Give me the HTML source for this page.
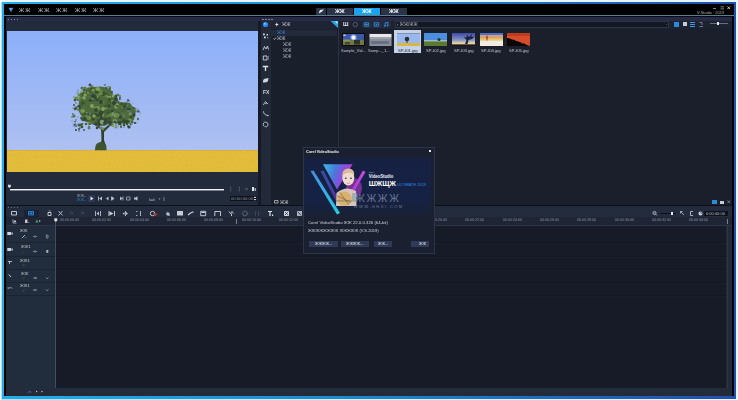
<!DOCTYPE html>
<html><head><meta charset="utf-8">
<style>
*{margin:0;padding:0;box-sizing:border-box}
html,body{width:738px;height:400px;overflow:hidden;background:#fff;font-family:"Liberation Sans",sans-serif}
.a{position:absolute}
.t{position:absolute;white-space:nowrap;font-size:5px;line-height:6px;color:#b9bec8;will-change:transform}
</style></head><body>
<div class="a" style="left:1px;top:1px;width:737px;height:399px;background:linear-gradient(90deg,#a8e6f8 0%,#d0f4fc 50%,#eaf6fc 100%);"></div>
<div class="a" style="left:1px;top:0px;width:737px;height:1.5px;background:#e6f7fd;"></div>
<div class="a" style="left:2px;top:2px;width:734px;height:396.5px;background:linear-gradient(90deg,#26ace8 0%,#1c8ccf 45%,#2050b0 100%);"></div>
<div class="a" style="left:4px;top:4px;width:730px;height:392px;background:#000;"></div>
<div class="a" style="left:4px;top:15px;width:730px;height:1px;background:#5a7f8c;"></div>
<svg class="a" style="left:8px;top:7px;" width="6" height="6" viewBox="0 0 6 6"><path d="M0.5 0.8 L5.5 0.8 L3 5.5 Z" fill="#3a70c0"/><path d="M1.3 1 L3.5 1 L3 3.8 Z" fill="#80c0f0"/><path d="M3.5 1 L5 1 L3.2 4 Z" fill="#4a90d8"/></svg>
<div class="t" style="left:18.5px;top:7.2px;font-size:5.6px;line-height:6.6px;color:#c4c8cc;letter-spacing:1.2px">ЖЖ</div>
<div class="t" style="left:37.5px;top:7.2px;font-size:5.6px;line-height:6.6px;color:#c4c8cc;letter-spacing:1.2px">ЖЖ</div>
<div class="t" style="left:56px;top:7.2px;font-size:5.6px;line-height:6.6px;color:#c4c8cc;letter-spacing:1.2px">ЖЖ</div>
<div class="t" style="left:74.5px;top:7.2px;font-size:5.6px;line-height:6.6px;color:#c4c8cc;letter-spacing:1.2px">ЖЖ</div>
<div class="t" style="left:93px;top:7.2px;font-size:5.6px;line-height:6.6px;color:#c4c8cc;letter-spacing:1.2px">ЖЖ</div>
<div class="a" style="left:316px;top:8px;width:10px;height:7px;background:#2a3347;"></div>
<div class="a" style="left:327px;top:8px;width:26px;height:7px;background:#2a3347;"></div>
<div class="a" style="left:354px;top:8px;width:26px;height:7px;background:#1aa3f0;"></div>
<div class="a" style="left:381px;top:8px;width:26px;height:7px;background:#2a3347;"></div>
<div class="t" style="left:335px;top:8.3px;font-size:5.4px;line-height:6.4px;color:#f4f4f4;font-weight:bold">ЖЖ</div>
<div class="t" style="left:362px;top:8.3px;font-size:5.4px;line-height:6.4px;color:#f4f8fc;font-weight:bold">ЖЖ</div>
<div class="t" style="left:389px;top:8.3px;font-size:5.4px;line-height:6.4px;color:#f4f4f4;font-weight:bold">ЖЖ</div>
<div class="t" style="left:697px;top:10px;font-size:4px;line-height:5px;color:#a8acb4;">V.Studio · 2019</div>
<div class="a" style="left:6px;top:16px;width:252px;height:189px;background:#222b3c;"></div>
<svg class="a" style="left:7px;top:31px" width="251" height="141" viewBox="7 31 251 141">
<defs><linearGradient id="sky" x1="0" y1="0" x2="0" y2="1"><stop offset="0" stop-color="#8cb0fa"/><stop offset="0.55" stop-color="#a2baf4"/><stop offset="1" stop-color="#b4c4ee"/></linearGradient>
<filter id="grain" x="0" y="0" width="1" height="1"><feTurbulence type="fractalNoise" baseFrequency="1.2" numOctaves="1" seed="3"/><feColorMatrix values="0 0 0 0 0.55  0 0 0 0 0.42  0 0 0 0 0.05  0 0 0 -1.4 0.9"/><feComposite in2="SourceGraphic" operator="in"/></filter></defs>
<rect x="7" y="31" width="251" height="141" fill="url(#sky)"/>
<rect x="7" y="150" width="251" height="22" fill="#e6be3a"/>
<rect x="7" y="150" width="251" height="22" fill="#fff" filter="url(#grain)" opacity="0.55"/><rect x="7" y="150" width="251" height="1" fill="#d8b040"/>
<path d="M101 126 L101.5 140 L100 146 L106 146 L104 140 L104 132 L113 123 L111.5 122.5 L103.5 129 Z" fill="#33402a"/>
<path d="M101.5 130 L90 121 L91 120 L102 128 Z" fill="#33402a"/>
<path d="M95 150.2 Q95 144 98 143 Q101 141 104 143 Q107 144 106.5 150.2 Z" fill="#3e5530"/>
<polygon points="80,93 88,87.5 100,86.5 110,88 114,96 120,102 130,103 136,111 134,120 124,124 112,123 104,126 94,125 84,121 78,110" fill="#4c6a3c"/>
<circle cx="82" cy="119" r="1.3" fill="#3e5630"/>
<circle cx="116" cy="107" r="1.3" fill="#34443a"/>
<circle cx="86" cy="124" r="0.9" fill="#34443a"/>
<circle cx="129" cy="109" r="1.5" fill="#34443a"/>
<circle cx="107" cy="95" r="2.1" fill="#486436"/>
<circle cx="134" cy="115" r="1.6" fill="#34443a"/>
<circle cx="106" cy="88" r="1.1" fill="#3e5630"/>
<circle cx="81" cy="125" r="1.6" fill="#486436"/>
<circle cx="79" cy="131" r="0.8" fill="#52703e"/>
<circle cx="103" cy="111" r="2.0" fill="#3e5630"/>
<circle cx="95" cy="108" r="1.2" fill="#789652"/>
<circle cx="125" cy="122" r="1.7" fill="#486436"/>
<circle cx="112" cy="121" r="1.1" fill="#52703e"/>
<circle cx="79" cy="107" r="2.0" fill="#34443a"/>
<circle cx="100" cy="101" r="1.2" fill="#3e5630"/>
<circle cx="103" cy="102" r="1.6" fill="#60803f"/>
<circle cx="106" cy="108" r="1.2" fill="#789652"/>
<circle cx="110" cy="122" r="1.8" fill="#34443a"/>
<circle cx="86" cy="114" r="2.0" fill="#84a060"/>
<circle cx="111" cy="115" r="1.8" fill="#6a8a48"/>
<circle cx="83" cy="91" r="1.1" fill="#789652"/>
<circle cx="95" cy="114" r="1.1" fill="#354a2c"/>
<circle cx="92" cy="87" r="1.7" fill="#60803f"/>
<circle cx="75" cy="125" r="0.9" fill="#34443a"/>
<circle cx="127" cy="102" r="0.7" fill="#34443a"/>
<circle cx="120" cy="118" r="1.7" fill="#52703e"/>
<circle cx="140" cy="113" r="0.8" fill="#84a060"/>
<circle cx="134" cy="108" r="1.1" fill="#34443a"/>
<circle cx="97" cy="95" r="1.9" fill="#34443a"/>
<circle cx="75" cy="125" r="1.1" fill="#354a2c"/>
<circle cx="126" cy="108" r="1.9" fill="#354a2c"/>
<circle cx="89" cy="97" r="1.3" fill="#52703e"/>
<circle cx="101" cy="91" r="1.7" fill="#60803f"/>
<circle cx="75" cy="100" r="1.4" fill="#3e5630"/>
<circle cx="124" cy="107" r="1.5" fill="#34443a"/>
<circle cx="108" cy="121" r="1.4" fill="#3e5630"/>
<circle cx="131" cy="124" r="1.4" fill="#486436"/>
<circle cx="134" cy="114" r="1.0" fill="#34443a"/>
<circle cx="101" cy="113" r="1.1" fill="#486436"/>
<circle cx="109" cy="97" r="2.1" fill="#84a060"/>
<circle cx="113" cy="96" r="1.4" fill="#84a060"/>
<circle cx="80" cy="128" r="0.8" fill="#486436"/>
<circle cx="109" cy="99" r="1.7" fill="#3e5630"/>
<circle cx="106" cy="94" r="1.4" fill="#3e5630"/>
<circle cx="82" cy="92" r="1.6" fill="#84a060"/>
<circle cx="98" cy="120" r="1.1" fill="#3e5630"/>
<circle cx="127" cy="124" r="0.9" fill="#34443a"/>
<circle cx="75" cy="122" r="0.9" fill="#3e5630"/>
<circle cx="83" cy="120" r="1.3" fill="#3e5630"/>
<circle cx="88" cy="119" r="1.7" fill="#486436"/>
<circle cx="98" cy="98" r="1.7" fill="#3e5630"/>
<circle cx="107" cy="111" r="2.0" fill="#486436"/>
<circle cx="114" cy="109" r="2.1" fill="#486436"/>
<circle cx="93" cy="119" r="1.8" fill="#354a2c"/>
<circle cx="108" cy="112" r="2.1" fill="#3e5630"/>
<circle cx="75" cy="125" r="1.0" fill="#34443a"/>
<circle cx="75" cy="125" r="1.4" fill="#34443a"/>
<circle cx="125" cy="106" r="1.6" fill="#354a2c"/>
<circle cx="117" cy="105" r="1.7" fill="#84a060"/>
<circle cx="108" cy="103" r="2.1" fill="#486436"/>
<circle cx="99" cy="94" r="1.7" fill="#6a8a48"/>
<circle cx="74" cy="105" r="0.9" fill="#354a2c"/>
<circle cx="88" cy="119" r="1.9" fill="#3e5630"/>
<circle cx="130" cy="120" r="1.7" fill="#789652"/>
<circle cx="103" cy="95" r="2.0" fill="#52703e"/>
<circle cx="98" cy="108" r="1.9" fill="#789652"/>
<circle cx="76" cy="107" r="1.1" fill="#486436"/>
<circle cx="106" cy="120" r="2.0" fill="#354a2c"/>
<circle cx="135" cy="123" r="1.1" fill="#34443a"/>
<circle cx="116" cy="122" r="1.6" fill="#354a2c"/>
<circle cx="121" cy="118" r="1.3" fill="#486436"/>
<circle cx="98" cy="115" r="1.0" fill="#3e5630"/>
<circle cx="93" cy="99" r="2.1" fill="#34443a"/>
<circle cx="99" cy="90" r="1.6" fill="#6a8a48"/>
<circle cx="124" cy="107" r="1.2" fill="#354a2c"/>
<circle cx="94" cy="116" r="1.2" fill="#6a8a48"/>
<circle cx="120" cy="96" r="0.9" fill="#52703e"/>
<circle cx="89" cy="127" r="0.9" fill="#3e5630"/>
<circle cx="81" cy="118" r="1.0" fill="#34443a"/>
<circle cx="85" cy="114" r="1.8" fill="#3e5630"/>
<circle cx="90" cy="102" r="1.4" fill="#60803f"/>
<circle cx="102" cy="115" r="2.0" fill="#789652"/>
<circle cx="90" cy="91" r="2.0" fill="#486436"/>
<circle cx="98" cy="96" r="1.3" fill="#60803f"/>
<circle cx="138" cy="119" r="1.2" fill="#52703e"/>
<circle cx="73" cy="114" r="1.0" fill="#52703e"/>
<circle cx="77" cy="98" r="1.4" fill="#6a8a48"/>
<circle cx="103" cy="129" r="1.4" fill="#6a8a48"/>
<circle cx="97" cy="89" r="1.5" fill="#84a060"/>
<circle cx="128" cy="126" r="1.1" fill="#52703e"/>
<circle cx="84" cy="103" r="1.2" fill="#3e5630"/>
<circle cx="110" cy="94" r="1.7" fill="#52703e"/>
<circle cx="129" cy="127" r="1.6" fill="#354a2c"/>
<circle cx="76" cy="130" r="1.0" fill="#34443a"/>
<circle cx="125" cy="122" r="1.3" fill="#354a2c"/>
<circle cx="130" cy="114" r="1.4" fill="#789652"/>
<circle cx="115" cy="107" r="1.1" fill="#3e5630"/>
<circle cx="128" cy="100" r="1.1" fill="#486436"/>
<circle cx="90" cy="101" r="1.4" fill="#34443a"/>
<circle cx="92" cy="115" r="2.0" fill="#3e5630"/>
<circle cx="75" cy="109" r="1.4" fill="#52703e"/>
<circle cx="90" cy="85" r="1.5" fill="#34443a"/>
<circle cx="73" cy="108" r="0.8" fill="#789652"/>
<circle cx="120" cy="117" r="1.9" fill="#34443a"/>
<circle cx="82" cy="88" r="1.5" fill="#52703e"/>
<circle cx="138" cy="111" r="1.6" fill="#34443a"/>
<circle cx="100" cy="119" r="1.4" fill="#84a060"/>
<circle cx="123" cy="110" r="1.6" fill="#3e5630"/>
<circle cx="76" cy="126" r="1.0" fill="#486436"/>
<circle cx="96" cy="110" r="1.7" fill="#486436"/>
<circle cx="122" cy="108" r="1.5" fill="#6a8a48"/>
<circle cx="82" cy="127" r="1.3" fill="#3e5630"/>
<circle cx="96" cy="115" r="1.2" fill="#354a2c"/>
<circle cx="114" cy="122" r="1.1" fill="#34443a"/>
<circle cx="138" cy="110" r="0.8" fill="#34443a"/>
<circle cx="127" cy="121" r="1.0" fill="#34443a"/>
<circle cx="76" cy="103" r="1.1" fill="#84a060"/>
<circle cx="83" cy="111" r="1.8" fill="#84a060"/>
<circle cx="129" cy="101" r="0.8" fill="#3e5630"/>
<circle cx="101" cy="113" r="2.2" fill="#354a2c"/>
<circle cx="72" cy="117" r="0.8" fill="#486436"/>
<circle cx="85" cy="88" r="1.5" fill="#52703e"/>
<circle cx="138" cy="110" r="0.8" fill="#52703e"/>
<circle cx="135" cy="109" r="1.3" fill="#60803f"/>
<circle cx="79" cy="95" r="1.4" fill="#60803f"/>
<circle cx="101" cy="116" r="1.4" fill="#34443a"/>
<circle cx="126" cy="122" r="1.3" fill="#34443a"/>
<circle cx="118" cy="95" r="1.5" fill="#60803f"/>
<circle cx="101" cy="102" r="2.0" fill="#34443a"/>
<circle cx="106" cy="96" r="1.5" fill="#60803f"/>
<circle cx="109" cy="106" r="1.7" fill="#354a2c"/>
<circle cx="113" cy="125" r="1.1" fill="#789652"/>
<circle cx="124" cy="121" r="2.0" fill="#354a2c"/>
<circle cx="118" cy="113" r="1.4" fill="#3e5630"/>
<circle cx="84" cy="94" r="2.0" fill="#354a2c"/>
<circle cx="124" cy="125" r="1.4" fill="#3e5630"/>
<circle cx="105" cy="85" r="1.1" fill="#34443a"/>
<circle cx="97" cy="126" r="0.9" fill="#6a8a48"/>
<circle cx="106" cy="106" r="1.6" fill="#3e5630"/>
<circle cx="98" cy="115" r="1.6" fill="#34443a"/>
<circle cx="114" cy="119" r="1.7" fill="#52703e"/>
<circle cx="133" cy="122" r="0.8" fill="#60803f"/>
<circle cx="97" cy="95" r="1.8" fill="#60803f"/>
<circle cx="127" cy="124" r="0.9" fill="#354a2c"/>
<circle cx="76" cy="98" r="1.1" fill="#52703e"/>
<circle cx="120" cy="98" r="1.0" fill="#34443a"/>
<circle cx="86" cy="93" r="1.5" fill="#3e5630"/>
<circle cx="106" cy="120" r="1.7" fill="#34443a"/>
<circle cx="86" cy="118" r="2.0" fill="#60803f"/>
<circle cx="94" cy="116" r="1.7" fill="#84a060"/>
<circle cx="97" cy="92" r="2.0" fill="#3e5630"/>
<circle cx="121" cy="104" r="1.1" fill="#3e5630"/>
<circle cx="79" cy="129" r="1.0" fill="#34443a"/>
<circle cx="123" cy="114" r="2.1" fill="#52703e"/>
<circle cx="102" cy="109" r="1.7" fill="#486436"/>
<circle cx="116" cy="116" r="1.8" fill="#789652"/>
<circle cx="97" cy="100" r="1.3" fill="#354a2c"/>
<circle cx="125" cy="116" r="1.4" fill="#52703e"/>
<circle cx="103" cy="109" r="1.9" fill="#84a060"/>
<circle cx="86" cy="124" r="1.2" fill="#486436"/>
<circle cx="103" cy="94" r="2.0" fill="#354a2c"/>
<circle cx="113" cy="113" r="1.0" fill="#84a060"/>
<circle cx="76" cy="108" r="1.5" fill="#34443a"/>
<circle cx="82" cy="124" r="1.1" fill="#3e5630"/>
<circle cx="94" cy="99" r="1.6" fill="#3e5630"/>
<circle cx="84" cy="90" r="1.1" fill="#3e5630"/>
<circle cx="116" cy="127" r="1.5" fill="#789652"/>
<circle cx="86" cy="88" r="0.8" fill="#789652"/>
<circle cx="109" cy="88" r="2.0" fill="#486436"/>
<circle cx="100" cy="122" r="2.0" fill="#34443a"/>
<circle cx="85" cy="119" r="1.9" fill="#354a2c"/>
<circle cx="109" cy="87" r="1.1" fill="#789652"/>
<circle cx="88" cy="114" r="1.1" fill="#34443a"/>
<circle cx="77" cy="93" r="0.9" fill="#84a060"/>
<circle cx="112" cy="125" r="1.3" fill="#52703e"/>
<circle cx="108" cy="117" r="1.4" fill="#6a8a48"/>
<circle cx="96" cy="124" r="1.8" fill="#34443a"/>
<circle cx="135" cy="123" r="0.7" fill="#3e5630"/>
<circle cx="112" cy="92" r="1.0" fill="#3e5630"/>
<circle cx="123" cy="110" r="1.7" fill="#486436"/>
<circle cx="82" cy="100" r="1.8" fill="#3e5630"/>
<circle cx="118" cy="117" r="1.3" fill="#52703e"/>
<circle cx="98" cy="124" r="1.0" fill="#52703e"/>
<circle cx="74" cy="97" r="1.1" fill="#84a060"/>
<circle cx="77" cy="99" r="0.8" fill="#60803f"/>
<circle cx="128" cy="122" r="2.1" fill="#354a2c"/>
<circle cx="81" cy="98" r="1.5" fill="#60803f"/>
<circle cx="78" cy="117" r="0.7" fill="#789652"/>
<circle cx="102" cy="94" r="1.0" fill="#6a8a48"/>
<circle cx="97" cy="128" r="1.3" fill="#34443a"/>
<circle cx="101" cy="119" r="2.0" fill="#34443a"/>
<circle cx="116" cy="107" r="1.8" fill="#84a060"/>
<circle cx="111" cy="101" r="2.0" fill="#3e5630"/>
<circle cx="84" cy="108" r="1.2" fill="#52703e"/>
<circle cx="92" cy="99" r="1.7" fill="#354a2c"/>
<circle cx="84" cy="130" r="0.9" fill="#3e5630"/>
<circle cx="101" cy="93" r="1.5" fill="#6a8a48"/>
<circle cx="117" cy="106" r="1.0" fill="#34443a"/>
<circle cx="124" cy="110" r="1.6" fill="#486436"/>
<circle cx="97" cy="97" r="1.2" fill="#789652"/>
<circle cx="113" cy="126" r="1.3" fill="#84a060"/>
<circle cx="120" cy="107" r="1.2" fill="#52703e"/>
<circle cx="120" cy="123" r="2.2" fill="#354a2c"/>
<circle cx="82" cy="103" r="1.1" fill="#34443a"/>
<circle cx="116" cy="96" r="1.6" fill="#354a2c"/>
<circle cx="89" cy="124" r="1.4" fill="#789652"/>
<circle cx="115" cy="121" r="2.1" fill="#789652"/>
<circle cx="121" cy="109" r="1.4" fill="#486436"/>
<circle cx="101" cy="117" r="1.3" fill="#34443a"/>
<circle cx="92" cy="89" r="1.7" fill="#354a2c"/>
<circle cx="98" cy="89" r="2.1" fill="#84a060"/>
<circle cx="103" cy="122" r="1.7" fill="#34443a"/>
<circle cx="74" cy="116" r="1.6" fill="#52703e"/>
<circle cx="78" cy="109" r="1.3" fill="#486436"/>
<circle cx="92" cy="106" r="2.0" fill="#84a060"/>
<circle cx="122" cy="104" r="1.2" fill="#3e5630"/>
<circle cx="99" cy="121" r="2.0" fill="#354a2c"/>
<circle cx="78" cy="100" r="1.0" fill="#34443a"/>
<circle cx="121" cy="126" r="0.8" fill="#354a2c"/>
<circle cx="116" cy="99" r="1.9" fill="#34443a"/>
<circle cx="121" cy="127" r="1.1" fill="#486436"/>
<circle cx="80" cy="100" r="1.2" fill="#6a8a48"/>
<circle cx="116" cy="125" r="0.7" fill="#34443a"/>
<circle cx="90" cy="124" r="1.1" fill="#3e5630"/>
<circle cx="82" cy="100" r="1.7" fill="#486436"/>
<circle cx="112" cy="111" r="1.2" fill="#34443a"/>
<circle cx="88" cy="93" r="1.3" fill="#6a8a48"/>
<circle cx="99" cy="124" r="2.0" fill="#34443a"/>
<circle cx="132" cy="122" r="1.4" fill="#486436"/>
<circle cx="93" cy="98" r="2.0" fill="#6a8a48"/>
<circle cx="102" cy="128" r="1.1" fill="#789652"/>
<circle cx="104" cy="119" r="1.1" fill="#354a2c"/>
<circle cx="76" cy="120" r="0.8" fill="#486436"/>
<circle cx="82" cy="111" r="1.7" fill="#789652"/>
<circle cx="79" cy="125" r="1.5" fill="#3e5630"/>
<circle cx="93" cy="90" r="1.6" fill="#789652"/>
<circle cx="116" cy="115" r="2.1" fill="#84a060"/>
<circle cx="112" cy="101" r="1.3" fill="#6a8a48"/>
<circle cx="114" cy="103" r="2.1" fill="#34443a"/>
<circle cx="102" cy="122" r="2.2" fill="#84a060"/>
<circle cx="84" cy="98" r="1.7" fill="#84a060"/>
<circle cx="82" cy="104" r="1.4" fill="#3e5630"/>
<circle cx="93" cy="96" r="2.0" fill="#34443a"/>
<circle cx="96" cy="110" r="2.0" fill="#354a2c"/>
<circle cx="78" cy="110" r="1.1" fill="#6a8a48"/>
<circle cx="85" cy="95" r="1.7" fill="#84a060"/>
<circle cx="95" cy="97" r="1.9" fill="#34443a"/>
<circle cx="131" cy="117" r="1.5" fill="#354a2c"/>
<circle cx="105" cy="123" r="1.9" fill="#34443a"/>
<circle cx="120" cy="99" r="1.2" fill="#486436"/>
<circle cx="115" cy="122" r="1.2" fill="#354a2c"/>
<circle cx="109" cy="122" r="1.8" fill="#34443a"/>
<circle cx="89" cy="118" r="2.2" fill="#6a8a48"/>
<circle cx="125" cy="104" r="1.3" fill="#3e5630"/>
<circle cx="109" cy="95" r="1.2" fill="#486436"/>
<circle cx="89" cy="128" r="1.4" fill="#60803f"/>
<circle cx="117" cy="115" r="2.1" fill="#6a8a48"/>
<circle cx="78" cy="98" r="1.5" fill="#789652"/>
<circle cx="109" cy="119" r="2.2" fill="#3e5630"/>
<circle cx="107" cy="111" r="1.1" fill="#486436"/>
<circle cx="78" cy="90" r="0.9" fill="#7a90b8" opacity="0.75"/>
<circle cx="74" cy="114" r="1.0" fill="#8aa4d8" opacity="0.75"/>
<circle cx="127" cy="102" r="0.7" fill="#7a90b8" opacity="0.75"/>
<circle cx="101" cy="128" r="0.9" fill="#7a90b8" opacity="0.75"/>
<circle cx="72" cy="121" r="1.0" fill="#8aa4d8" opacity="0.75"/>
<circle cx="75" cy="95" r="1.0" fill="#9ab0d8" opacity="0.75"/>
<circle cx="113" cy="115" r="0.9" fill="#8aa4d8" opacity="0.75"/>
<circle cx="91" cy="128" r="0.8" fill="#8aa4d8" opacity="0.75"/>
<circle cx="78" cy="124" r="1.0" fill="#7a90b8" opacity="0.75"/>
<circle cx="83" cy="122" r="0.9" fill="#9ab0d8" opacity="0.75"/>
<circle cx="104" cy="127" r="0.7" fill="#7a90b8" opacity="0.75"/>
<circle cx="137" cy="110" r="0.7" fill="#9ab0d8" opacity="0.75"/>
<circle cx="118" cy="126" r="0.9" fill="#7a90b8" opacity="0.75"/>
<circle cx="105" cy="85" r="1.0" fill="#8aa4d8" opacity="0.75"/>
<circle cx="76" cy="120" r="1.0" fill="#7a90b8" opacity="0.75"/>
<circle cx="127" cy="106" r="0.7" fill="#8aa4d8" opacity="0.75"/>
<circle cx="128" cy="102" r="0.9" fill="#7a90b8" opacity="0.75"/>
<circle cx="80" cy="119" r="0.8" fill="#8aa4d8" opacity="0.75"/>
<circle cx="131" cy="112" r="0.6" fill="#7a90b8" opacity="0.75"/>
<circle cx="78" cy="92" r="1.0" fill="#7a90b8" opacity="0.75"/>
<circle cx="85" cy="92" r="0.9" fill="#7a90b8" opacity="0.75"/>
<circle cx="75" cy="123" r="1.0" fill="#9ab0d8" opacity="0.75"/>
<circle cx="138" cy="110" r="1.0" fill="#8aa4d8" opacity="0.75"/>
<circle cx="107" cy="87" r="0.7" fill="#7a90b8" opacity="0.75"/>
<circle cx="124" cy="116" r="0.7" fill="#8aa4d8" opacity="0.75"/>
<circle cx="121" cy="99" r="0.9" fill="#8aa4d8" opacity="0.75"/>
<circle cx="131" cy="114" r="0.8" fill="#7a90b8" opacity="0.75"/>
<circle cx="133" cy="103" r="0.9" fill="#8aa4d8" opacity="0.75"/>
<circle cx="90" cy="113" r="0.6" fill="#9ab0d8" opacity="0.75"/>
<circle cx="90" cy="86" r="0.7" fill="#9ab0d8" opacity="0.75"/>
<circle cx="107" cy="125" r="1.0" fill="#7a90b8" opacity="0.75"/>
<circle cx="73" cy="126" r="0.7" fill="#7a90b8" opacity="0.75"/>
<circle cx="118" cy="97" r="1.0" fill="#9ab0d8" opacity="0.75"/>
<circle cx="78" cy="128" r="0.8" fill="#9ab0d8" opacity="0.75"/>
<circle cx="77" cy="104" r="0.7" fill="#9ab0d8" opacity="0.75"/>
<circle cx="132" cy="124" r="0.9" fill="#9ab0d8" opacity="0.75"/>
<circle cx="90" cy="114" r="0.8" fill="#7a90b8" opacity="0.75"/>
<circle cx="73" cy="120" r="0.8" fill="#9ab0d8" opacity="0.75"/>
<circle cx="114" cy="95" r="0.8" fill="#8aa4d8" opacity="0.75"/>
<circle cx="78" cy="108" r="1.0" fill="#9ab0d8" opacity="0.75"/>
<circle cx="137" cy="108" r="0.6" fill="#7a90b8" opacity="0.75"/>
<circle cx="131" cy="122" r="0.6" fill="#9ab0d8" opacity="0.75"/>
<circle cx="128" cy="111" r="0.7" fill="#7a90b8" opacity="0.75"/>
<circle cx="137" cy="112" r="0.7" fill="#8aa4d8" opacity="0.75"/>
<circle cx="124" cy="127" r="1.0" fill="#7a90b8" opacity="0.75"/>
<circle cx="75" cy="128" r="0.7" fill="#8aa4d8" opacity="0.75"/>
<circle cx="76" cy="107" r="0.7" fill="#8aa4d8" opacity="0.75"/>
<circle cx="129" cy="111" r="0.7" fill="#7a90b8" opacity="0.75"/>
<circle cx="119" cy="115" r="0.7" fill="#7a90b8" opacity="0.75"/>
<circle cx="97" cy="86" r="0.8" fill="#9ab0d8" opacity="0.75"/>
<circle cx="116" cy="126" r="0.9" fill="#8aa4d8" opacity="0.75"/>
<circle cx="126" cy="108" r="0.7" fill="#9ab0d8" opacity="0.75"/>
<circle cx="100" cy="128" r="0.8" fill="#7a90b8" opacity="0.75"/>
<circle cx="140" cy="115" r="0.9" fill="#9ab0d8" opacity="0.75"/>
<circle cx="139" cy="110" r="0.8" fill="#8aa4d8" opacity="0.75"/>
<circle cx="90" cy="123" r="0.8" fill="#7a90b8" opacity="0.75"/>
<circle cx="108" cy="88" r="0.9" fill="#8aa4d8" opacity="0.75"/>
<circle cx="137" cy="123" r="0.8" fill="#7a90b8" opacity="0.75"/>
<circle cx="76" cy="125" r="0.8" fill="#8aa4d8" opacity="0.75"/>
<circle cx="75" cy="126" r="1.0" fill="#7a90b8" opacity="0.75"/>
<circle cx="137" cy="117" r="0.9" fill="#9ab0d8" opacity="0.75"/>
<circle cx="73" cy="124" r="0.6" fill="#8aa4d8" opacity="0.75"/>
<circle cx="84" cy="124" r="0.7" fill="#7a90b8" opacity="0.75"/>
<circle cx="103" cy="85" r="0.9" fill="#9ab0d8" opacity="0.75"/>
<circle cx="81" cy="120" r="0.7" fill="#7a90b8" opacity="0.75"/>
<circle cx="118" cy="127" r="0.9" fill="#9ab0d8" opacity="0.75"/>
<circle cx="79" cy="93" r="0.8" fill="#8aa4d8" opacity="0.75"/>
<circle cx="129" cy="123" r="0.7" fill="#8aa4d8" opacity="0.75"/>
<circle cx="76" cy="107" r="0.7" fill="#8aa4d8" opacity="0.75"/>
<circle cx="122" cy="124" r="1.0" fill="#8aa4d8" opacity="0.75"/>
</svg>
<div class="a" style="left:10px;top:189px;width:214px;height:1px;background:#f0f2f6;"></div>
<div class="a" style="left:10px;top:190px;width:214px;height:1px;background:#7a8090;"></div>
<div class="t" style="left:77px;top:194px;font-size:3.8px;line-height:4.8px;color:#a4aab4;">ЖЖ–</div>
<div class="t" style="left:77px;top:198px;font-size:3.8px;line-height:4.8px;color:#2a80d0;">ЖЖ–</div>
<div class="a" style="left:88px;top:195px;width:7px;height:7px;background:#2c3650;"></div>
<div class="t" style="left:149px;top:197px;font-size:4px;line-height:5px;color:#b0b6c0;">Ішіі</div>
<div class="a" style="left:230px;top:196px;width:27px;height:5px;background:#0e121c;"></div>
<div class="t" style="left:231px;top:195.5px;font-size:4.2px;line-height:5.2px;color:#8a909a;">00:00:00:00</div>
<div class="a" style="left:258px;top:16px;width:3px;height:189px;background:#161a26;"></div>
<div class="a" style="left:261px;top:16px;width:10px;height:189px;background:#222a3a;"></div>
<div class="a" style="left:262px;top:21px;width:7px;height:7px;background:#1c2a44;"></div>
<div class="t" style="left:262.5px;top:88.5px;font-size:5px;line-height:6px;color:#d0d4da;font-weight:bold">FX</div>
<div class="a" style="left:271px;top:16px;width:67px;height:189px;background:#1a1f2c;"></div>
<div class="a" style="left:271px;top:21px;width:67px;height:8px;background:#1e2433;"></div>
<div class="t" style="left:282px;top:22px;font-size:4.5px;line-height:5.5px;color:#c8ccd4;">ЖЖ</div>
<div class="a" style="left:271px;top:30px;width:66px;height:5.5px;background:#232b3b;"></div>
<div class="t" style="left:277px;top:30px;font-size:4.5px;line-height:5.5px;color:#3a7ad0;">ЖЖ</div>
<div class="t" style="left:277px;top:36px;font-size:4.5px;line-height:5.5px;color:#c0c4cc;">ЖЖ</div>
<div class="t" style="left:283px;top:42px;font-size:4.5px;line-height:5.5px;color:#b4b8c0;">ЖЖ</div>
<div class="t" style="left:283px;top:48px;font-size:4.5px;line-height:5.5px;color:#b4b8c0;">ЖЖ</div>
<div class="t" style="left:283px;top:54px;font-size:4.5px;line-height:5.5px;color:#b4b8c0;">ЖЖ</div>
<div class="a" style="left:338px;top:16px;width:1px;height:189px;background:#2a3242;"></div>
<div class="t" style="left:280px;top:199.5px;font-size:4.5px;line-height:5.5px;color:#d0d4dc;">ЖЖ</div>
<div class="a" style="left:339px;top:16px;width:393px;height:189px;background:#1b1f2c;"></div>
<div class="a" style="left:339px;top:21px;width:393px;height:8px;background:#1d2231;"></div>
<div class="t" style="left:342.5px;top:21px;font-size:5.5px;line-height:6.5px;color:#e8eaee;font-weight:bold">Ш</div>
<div class="a" style="left:362px;top:21px;width:29px;height:6.5px;background:#222c40;"></div>
<div class="a" style="left:395px;top:21px;width:274px;height:7px;background:#141822;border:1px solid #2e3444"></div>
<div class="t" style="left:397px;top:21.5px;font-size:4.5px;line-height:5.5px;color:#b0b6c0;">‹  ЖЖ/ЖЖ</div>
<div class="t" style="left:666px;top:21.5px;font-size:4px;line-height:5px;color:#c0c4cc;">·</div>
<div class="a" style="left:674px;top:21.5px;width:5px;height:5px;background:#2a8ad8;"></div>
<div class="a" style="left:682.5px;top:22px;width:4px;height:4px;background:#c8ccd4;"></div>
<div class="a" style="left:690px;top:22px;width:4.5px;height:1px;background:#3a9ae8;"></div>
<div class="a" style="left:690px;top:24px;width:4.5px;height:1px;background:#3a9ae8;"></div>
<div class="a" style="left:690px;top:26px;width:4.5px;height:1px;background:#3a9ae8;"></div>
<div class="a" style="left:710px;top:23px;width:18px;height:1px;background:#6a707a;"></div>
<div class="a" style="left:717px;top:21.5px;width:2px;height:3px;background:#e8eaee;"></div>
<div class="a" style="left:6px;top:16px;width:726px;height:1px;background:#060a18;"></div>
<div class="a" style="left:6px;top:17px;width:726px;height:4px;background:#262a46;"></div>
<div class="a" style="left:7.5px;top:18.5px;width:1.5px;height:1px;background:#7a8290;"></div>
<div class="a" style="left:10.5px;top:18.5px;width:1.5px;height:1px;background:#7a8290;"></div>
<div class="a" style="left:13.5px;top:18.5px;width:1.5px;height:1px;background:#7a8290;"></div>
<div class="a" style="left:16.5px;top:18.5px;width:1.5px;height:1px;background:#7a8290;"></div>
<div class="a" style="left:262px;top:18.5px;width:1.5px;height:1px;background:#7a8290;"></div>
<div class="a" style="left:265px;top:18.5px;width:1.5px;height:1px;background:#7a8290;"></div>
<div class="a" style="left:268px;top:18.5px;width:1.5px;height:1px;background:#7a8290;"></div>
<div class="a" style="left:271px;top:18.5px;width:1.5px;height:1px;background:#7a8290;"></div>
<div class="a" style="left:394px;top:30px;width:27px;height:23px;background:#c6d2e6;"></div>
<svg class="a" style="left:341.5px;top:33px" width="23" height="13" viewBox="0 0 23 13"><defs><radialGradient id="sun"><stop offset="0" stop-color="#ffffff"/><stop offset="0.4" stop-color="#e8f0ff"/><stop offset="1" stop-color="#6a8ad0" stop-opacity="0"/></radialGradient></defs><rect width="23" height="13" fill="#0a0a0c"/><rect x="1" y="1" width="21" height="11" fill="#3a5aa8"/><circle cx="11.5" cy="4.5" r="4" fill="url(#sun)"/><rect x="1" y="7" width="21" height="5" fill="#707840"/><rect x="1" y="6.5" width="7" height="2" fill="#8a9060"/><rect x="12" y="7" width="6" height="4.5" fill="#30302a"/><rect x="3" y="9" width="5" height="2.5" fill="#484830"/><rect x="1.5" y="1.5" width="2" height="1.5" fill="#d0d4dc"/></svg>
<svg class="a" style="left:369px;top:33px" width="23" height="13" viewBox="0 0 23 13"><rect width="23" height="13" fill="#2a2a30"/><rect x="0.5" y="1" width="22" height="3" fill="#e8e8ec"/><rect x="0.5" y="4" width="22" height="2" fill="#a0a4a8"/><rect x="0.5" y="6" width="22" height="7" fill="#8890a0"/><rect x="2" y="8" width="18" height="3" fill="#6a7080"/></svg>
<svg class="a" style="left:396.5px;top:33px" width="23" height="13" viewBox="0 0 23 13"><rect width="23" height="13" fill="#9ab8f0"/><rect x="0" y="0" width="23" height="0.8" fill="#7a8aa0"/><rect x="0" y="10" width="23" height="3" fill="#d8b840"/><circle cx="10" cy="6" r="2.3" fill="#2a3428"/><rect x="9.5" y="7" width="1" height="3" fill="#2a3428"/></svg>
<svg class="a" style="left:424px;top:33px" width="23" height="13" viewBox="0 0 23 13"><rect width="23" height="13" fill="#4a8ee0"/><rect x="0" y="7" width="23" height="6" fill="#5a7a30"/><rect x="0" y="7" width="23" height="1.5" fill="#a0b8c8"/><circle cx="15" cy="6.5" r="1.5" fill="#2a3020"/></svg>
<svg class="a" style="left:452px;top:33px" width="23" height="13" viewBox="0 0 23 13"><defs><linearGradient id="ss" x1="0" y1="0" x2="0" y2="1"><stop offset="0" stop-color="#3a48a8"/><stop offset="0.55" stop-color="#8a96c0"/><stop offset="0.8" stop-color="#e8d8a8"/><stop offset="0.9" stop-color="#c09050"/><stop offset="1" stop-color="#202020"/></linearGradient></defs><rect width="23" height="13" fill="url(#ss)"/><path d="M13 11 L14.5 7 L11.5 4 L14 4.5 L15.5 2 L17 4 L20 1 L19.5 4 L22.5 3.5 L20 6 L16.5 7 L15.5 11 Z" fill="#1a2440"/><rect x="0" y="11.5" width="23" height="1.5" fill="#1a1a1a"/></svg>
<svg class="a" style="left:479.5px;top:33px" width="23" height="13" viewBox="0 0 23 13"><rect width="23" height="13" fill="#d4a274"/><rect x="0" y="0" width="23" height="2" fill="#4a70d0"/><rect x="0" y="5.5" width="23" height="2" fill="#e8c868"/><rect x="0" y="7.5" width="23" height="5.5" fill="#f2ece0"/><rect x="6.5" y="2.5" width="1" height="5" fill="#b03020"/><circle cx="7" cy="4.5" r="1.1" fill="#d04030"/></svg>
<svg class="a" style="left:506.5px;top:33px" width="23" height="13" viewBox="0 0 23 13"><rect width="23" height="13" fill="#d44c2a"/><rect x="0" y="0" width="23" height="3" fill="#c03a20"/><path d="M0 5 L3 5.5 L5 6.5 L8 7 L11 8.5 L14 9.5 L17 10.5 L19 11.5 L21 12.5 L23 13 H0 Z" fill="#0a0606"/><circle cx="9" cy="7.5" r="0.6" fill="#e08040"/><circle cx="15" cy="10" r="0.6" fill="#e08040"/></svg>
<div class="t" style="left:340.5px;top:47.8px;font-size:4px;line-height:5px;color:#c4c8d0;">Sample_Vid...</div>
<div class="t" style="left:367.5px;top:47.8px;font-size:4px;line-height:5px;color:#c4c8d0;">Samp..._1...</div>
<div class="t" style="left:398px;top:47.8px;font-size:4.2px;line-height:5.2px;color:#1a2030;">SP-I01.jpg</div>
<div class="t" style="left:426px;top:47.8px;font-size:4.2px;line-height:5.2px;color:#c4c8d0;">SP-I02.jpg</div>
<div class="t" style="left:453.5px;top:47.8px;font-size:4.2px;line-height:5.2px;color:#c4c8d0;">SP-I03.jpg</div>
<div class="t" style="left:481px;top:47.8px;font-size:4.2px;line-height:5.2px;color:#c4c8d0;">SP-I04.jpg</div>
<div class="t" style="left:508.5px;top:47.8px;font-size:4.2px;line-height:5.2px;color:#c4c8d0;">SP-I05.jpg</div>
<div class="a" style="left:712px;top:200px;width:5px;height:4px;background:#2a8ad8;"></div>
<div class="a" style="left:720px;top:200.5px;width:4px;height:3px;background:#c8ccd4;"></div>
<div class="a" style="left:6px;top:205px;width:726px;height:1px;background:#0c1018;"></div>
<div class="a" style="left:6px;top:206px;width:726px;height:10.5px;background:#232c3d;"></div>
<div class="a" style="left:7.5px;top:207px;width:1.5px;height:1px;background:#6a7280;"></div>
<div class="a" style="left:10.5px;top:207px;width:1.5px;height:1px;background:#6a7280;"></div>
<div class="a" style="left:13.5px;top:207px;width:1.5px;height:1px;background:#6a7280;"></div>
<div class="a" style="left:16.5px;top:207px;width:1.5px;height:1px;background:#6a7280;"></div>
<div class="a" style="left:23.5px;top:209.5px;width:15.5px;height:7px;background:#1a2235;"></div>
<div class="a" style="left:660px;top:213px;width:16px;height:1px;background:#0e1218;"></div>
<div class="a" style="left:671px;top:211.5px;width:2px;height:3.5px;background:#e8eaee;"></div>
<div class="a" style="left:704px;top:211px;width:24px;height:5px;background:#0e121c;"></div>
<div class="t" style="left:706px;top:210.5px;font-size:4px;line-height:5px;color:#b8bec8;">0:00:00:00</div>
<div class="a" style="left:6px;top:216.5px;width:726px;height:8.5px;background:#1f2535;"></div>
<div class="t" style="left:59.7px;top:217.8px;font-size:3.6px;line-height:4.6px;color:#8a909a;">00:00:00:00</div>
<div class="t" style="left:92.3px;top:217.8px;font-size:3.6px;line-height:4.6px;color:#8a909a;">00:00:02:00</div>
<div class="t" style="left:129.6px;top:217.8px;font-size:3.6px;line-height:4.6px;color:#8a909a;">00:00:04:00</div>
<div class="t" style="left:166.89999999999998px;top:217.8px;font-size:3.6px;line-height:4.6px;color:#8a909a;">00:00:06:00</div>
<div class="t" style="left:204.2px;top:217.8px;font-size:3.6px;line-height:4.6px;color:#8a909a;">00:00:08:00</div>
<div class="t" style="left:241.5px;top:217.8px;font-size:3.6px;line-height:4.6px;color:#8a909a;">00:00:10:00</div>
<div class="t" style="left:278.8px;top:217.8px;font-size:3.6px;line-height:4.6px;color:#8a909a;">00:00:12:00</div>
<div class="t" style="left:316.1px;top:217.8px;font-size:3.6px;line-height:4.6px;color:#8a909a;">00:00:14:00</div>
<div class="t" style="left:353.40000000000003px;top:217.8px;font-size:3.6px;line-height:4.6px;color:#8a909a;">00:00:16:00</div>
<div class="t" style="left:390.70000000000005px;top:217.8px;font-size:3.6px;line-height:4.6px;color:#8a909a;">00:00:18:00</div>
<div class="t" style="left:428.00000000000006px;top:217.8px;font-size:3.6px;line-height:4.6px;color:#8a909a;">00:00:20:00</div>
<div class="t" style="left:465.30000000000007px;top:217.8px;font-size:3.6px;line-height:4.6px;color:#8a909a;">00:00:22:00</div>
<div class="t" style="left:502.6000000000001px;top:217.8px;font-size:3.6px;line-height:4.6px;color:#8a909a;">00:00:24:00</div>
<div class="t" style="left:539.9000000000001px;top:217.8px;font-size:3.6px;line-height:4.6px;color:#8a909a;">00:00:26:00</div>
<div class="t" style="left:577.2px;top:217.8px;font-size:3.6px;line-height:4.6px;color:#8a909a;">00:00:28:00</div>
<div class="t" style="left:614.5px;top:217.8px;font-size:3.6px;line-height:4.6px;color:#8a909a;">00:00:30:00</div>
<div class="t" style="left:651.8px;top:217.8px;font-size:3.6px;line-height:4.6px;color:#8a909a;">00:00:32:00</div>
<div class="t" style="left:689.0999999999999px;top:217.8px;font-size:3.6px;line-height:4.6px;color:#8a909a;">00:00:34:00</div>
<div class="a" style="left:235.5px;top:219px;width:1px;height:5px;background:#7a808a;"></div>
<div class="a" style="left:727px;top:219px;width:1px;height:5px;background:#7a808a;"></div>
<div class="a" style="left:6px;top:225px;width:726px;height:1px;background:#2c3546;"></div>
<div class="a" style="left:6px;top:226px;width:49px;height:162px;background:#212c3c;"></div>
<div class="a" style="left:55px;top:222px;width:1px;height:166px;background:#434c5e;"></div>
<div class="a" style="left:56px;top:226px;width:670px;height:162px;background:#171b27;"></div>
<div class="a" style="left:726px;top:226px;width:6px;height:162px;background:#222a38;"></div>
<div class="a" style="left:726.5px;top:226px;width:0.5px;height:162px;background:#2e3646;"></div>
<div class="a" style="left:6px;top:241.5px;width:49px;height:1px;background:#1a2332;"></div>
<div class="a" style="left:56px;top:241.5px;width:670px;height:1px;background:#12161f;"></div>
<div class="a" style="left:56px;top:242.5px;width:670px;height:0.6px;background:#1a1f2b;"></div>
<div class="a" style="left:6px;top:256px;width:49px;height:1px;background:#1a2332;"></div>
<div class="a" style="left:56px;top:256px;width:670px;height:1px;background:#12161f;"></div>
<div class="a" style="left:56px;top:257px;width:670px;height:0.6px;background:#1a1f2b;"></div>
<div class="a" style="left:6px;top:269px;width:49px;height:1px;background:#1a2332;"></div>
<div class="a" style="left:56px;top:269px;width:670px;height:1px;background:#12161f;"></div>
<div class="a" style="left:56px;top:270px;width:670px;height:0.6px;background:#1a1f2b;"></div>
<div class="a" style="left:6px;top:281.5px;width:49px;height:1px;background:#1a2332;"></div>
<div class="a" style="left:56px;top:281.5px;width:670px;height:1px;background:#12161f;"></div>
<div class="a" style="left:56px;top:282.5px;width:670px;height:0.6px;background:#1a1f2b;"></div>
<div class="a" style="left:6px;top:294.5px;width:49px;height:1px;background:#1a2332;"></div>
<div class="a" style="left:56px;top:294.5px;width:670px;height:1px;background:#12161f;"></div>
<div class="a" style="left:56px;top:295.5px;width:670px;height:0.6px;background:#1a1f2b;"></div>
<div class="t" style="left:20px;top:228.3px;font-size:4px;line-height:5px;color:#c8ccd4;">ЖЖ</div>
<div class="t" style="left:20.5px;top:244px;font-size:4px;line-height:5px;color:#c8ccd4;">ЖЖ1</div>
<div class="t" style="left:20px;top:257.5px;font-size:4px;line-height:5px;color:#c8ccd4;">ЖЖ1</div>
<div class="t" style="left:20.5px;top:270.5px;font-size:4px;line-height:5px;color:#c8ccd4;">ЖЖ</div>
<div class="t" style="left:20px;top:283px;font-size:4px;line-height:5px;color:#c8ccd4;">ЖЖ1</div>
<div class="a" style="left:6px;top:388px;width:726px;height:1px;background:#262e3e;"></div>
<div class="a" style="left:6px;top:389px;width:726px;height:5.5px;background:#222b3c;"></div>
<div class="a" style="left:6px;top:394.5px;width:726px;height:0.5px;background:#2a2a30;"></div>
<svg class="a" style="left:0;top:0" width="738" height="400" viewBox="0 0 738 400"><path d="M318.5 13.5 L320 10 L324 9.5 L321.5 12 Z" fill="#e8ecf0" />
<rect x="713" y="8" width="3" height="0.8" fill="#9aa0a8" />
<rect x="720.5" y="6.5" width="3.5" height="0.8" fill="#9aa0a8" />
<rect x="720.5" y="8.5" width="3.5" height="0.8" fill="#9aa0a8" />
<path d="M727.5 6.5 L730 9 M730 6.5 L727.5 9" fill="none" stroke="#d0d4d8" stroke-width="0.9" />
<path d="M8 184.8 H10.8 V186.8 L9.4 188 L8 186.8 Z" fill="#d8dce4" />
<path d="M231.5 187 H230.5 V191 H231.5" fill="none" stroke="#50596a" stroke-width="0.7" />
<path d="M238.5 187 H239.5 V191 H238.5" fill="none" stroke="#5a6272" stroke-width="0.7" />
<path d="M245 188 L248 190 M245 190 L248 188" fill="none" stroke="#5a6272" stroke-width="0.7" />
<rect x="252" y="187" width="2" height="4" fill="#e0e4ea" />
<rect x="254.5" y="188" width="1.5" height="3" fill="#a0a8b4" />
<path d="M90.5 196.5 L93.5 198.5 L90.5 200.5 Z" fill="#dfe3ea" />
<rect x="98" y="196.5" width="0.9" height="4" fill="#b8bec8" />
<path d="M102 196.5 L99.2 198.5 L102 200.5 Z" fill="#b8bec8" />
<path d="M106 198.5 L108.5 196.5 V200.5 Z" fill="#b8bec8" />
<path d="M112 196.5 L114.5 198.5 L112 200.5 Z" fill="#b8bec8" />
<rect x="111" y="196.5" width="0.9" height="4" fill="#b8bec8" />
<path d="M120 196.5 L122.5 198.5 L120 200.5 Z" fill="#b8bec8" />
<rect x="122.5" y="196.5" width="0.9" height="4" fill="#b8bec8" />
<path d="M126.5 197 H130 V200 H126.5 Z" fill="none" stroke="#b8bec8" stroke-width="0.7" />
<path d="M134 197.5 H135.5 L137.5 196.3 V200.7 L135.5 199.5 H134 Z" fill="#b8bec8" />
<path d="M158.5 198.5 L160.5 198.5 L159.5 199.8 Z" fill="#b0b6c0" />
<path d="M164 197 V201" fill="none" stroke="#b0b6c0" stroke-width="0.6" />
<path d="M253.5 198 L255 196.5 L256.5 198 Z M253.5 199 L255 200.5 L256.5 199 Z" fill="#e0e4ea" />
<circle cx="265.5" cy="24.5" r="2.6" fill="#2d8ee0" />
<circle cx="264.8" cy="23.7" r="1" fill="#8ac4f4" />
<rect x="263" y="33.5" width="1.8" height="1.8" fill="#d0d4da" />
<rect x="266.5" y="34" width="1.5" height="1.5" fill="#d0d4da" />
<rect x="264" y="36.5" width="1.8" height="1.8" fill="#d0d4da" />
<rect x="267" y="37" width="1.3" height="1.3" fill="#8a909a" />
<path d="M263 50 L264.5 46.5 L266 49 L267.5 46 L268.5 49.5" fill="none" stroke="#d0d4da" stroke-width="0.9" />
<path d="M263.3 56 H267 V60 H263.3 Z" fill="none" stroke="#d0d4da" stroke-width="0.9" />
<rect x="268" y="56.5" width="0.8" height="0.8" fill="#d0d4da" />
<rect x="268" y="58.5" width="0.8" height="0.8" fill="#d0d4da" />
<path d="M262.8 66.5 H268.2 M265.5 66.5 V71" fill="none" stroke="#e0e4e8" stroke-width="1.3" />
<path d="M263 81.5 Q263 78.5 266 78.5 L268.5 78 L268 81 Q267 82.5 263 82.5 Z" fill="#d0d4da" />
<path d="M263.3 105 L265.5 101.5 L268 104" fill="none" stroke="#d0d4da" stroke-width="0.8" />
<circle cx="266" cy="103.5" r="0.7" fill="#d0d4da" />
<path d="M263.5 111.3 Q263.5 115 268 115.5" fill="none" stroke="#d0d4da" stroke-width="0.8" />
<circle cx="268" cy="115.5" r="0.7" fill="#d0d4da" />
<path d="M263.5 126 Q262.5 122 266 122 Q268.5 122.5 268 125.5 Q267 127.5 264.5 126.5" fill="none" stroke="#d0d4da" stroke-width="0.8" />
<path d="M276.8 22.3 L277.4 24 L279 24.5 L277.4 25 L276.8 26.7 L276.2 25 L274.6 24.5 L276.2 24 Z" fill="#e8ecf0" />
<path d="M330.5 21 H338 V28 Z" fill="#2aa6e4" />
<path d="M335 21.5 L337.5 21.5 L337.5 24 Z" fill="#e0f4ff" />
<path d="M273.5 38.5 L274.5 39.5 L276 37.5" fill="none" stroke="#c8ccd4" stroke-width="0.8" />
<path d="M274.5 200.5 H278 V203 H274.5 Z" fill="none" stroke="#d0d4dc" stroke-width="0.7" />
<circle cx="355.3" cy="24.5" r="2.2" fill="none" stroke="#5a6270" stroke-width="0.9"/>
<path d="M364.3 22.8 H368.7 V26.2 H364.3 Z" fill="none" stroke="#3a9ae4" stroke-width="0.8" />
<rect x="365.3" y="23.8" width="2.4" height="1.4" fill="#3a9ae4" />
<path d="M374.3 22.8 H378.7 V26.2 H374.3 Z" fill="none" stroke="#3a9ae4" stroke-width="0.8" />
<circle cx="376.5" cy="24.5" r="0.8" fill="#3a9ae4" />
<path d="M385.2 26 V22.8 L388 22.5 V25.5" fill="none" stroke="#3a9ae4" stroke-width="0.8" />
<circle cx="384.6" cy="26" r="0.8" fill="#3a9ae4" />
<circle cx="387.4" cy="25.7" r="0.8" fill="#3a9ae4" />
<path d="M699.5 22.5 H702 V25 M699.5 26.5 H703" fill="none" stroke="#8a909a" stroke-width="0.8" />
<path d="M727.5 200.5 L730 203 M730 200.5 L727.5 203" fill="none" stroke="#8a909a" stroke-width="0.8" />
<path d="M11.5 211.5 H16.5 V215 H11.5 Z" fill="none" stroke="#d0d4da" stroke-width="0.9" />
<path d="M28.5 211.5 H33.5 V215 H28.5 Z" fill="none" stroke="#2a8ae0" stroke-width="0.9" />
<rect x="29.5" y="212.5" width="3" height="1.5" fill="#2a8ae0" />
<path d="M48 212.5 H51 V215.5 H48 Z" fill="none" stroke="#d0d4da" stroke-width="0.9" />
<path d="M48.8 211 H50.5" fill="none" stroke="#d0d4da" stroke-width="0.7" />
<path d="M58.5 211 L62.5 215.5 M62.5 211 L58.5 215.5" fill="none" stroke="#b8bec8" stroke-width="0.9" />
<path d="M70 214.5 Q70 211.5 72 212 L72.5 214" fill="none" stroke="#4a5262" stroke-width="0.8" />
<path d="M84 214.5 Q84 211.5 82 212 L81.5 214" fill="none" stroke="#4a5262" stroke-width="0.8" />
<rect x="95" y="211" width="0.9" height="5" fill="#b8bec8" />
<path d="M96.5 213.5 L99 211.5 V215.5 Z" fill="#b8bec8" />
<rect x="100" y="211" width="0.9" height="5" fill="#b8bec8" />
<rect x="108.5" y="211" width="0.9" height="5" fill="#d0d4da" />
<rect x="114" y="211" width="0.9" height="5" fill="#d0d4da" />
<path d="M109.5 211.5 L113.5 213.5 L109.5 215.5 Z" fill="#d0d4da" />
<path d="M122.5 213.5 L124.5 212 V215 Z" fill="#b8bec8" />
<rect x="125" y="211" width="0.9" height="5" fill="#b8bec8" />
<path d="M128 213.5 L126 212 V215 Z" fill="#b8bec8" />
<path d="M136 211.5 H137.5 M136 215.5 H137.5" fill="none" stroke="#b8bec8" stroke-width="0.8" />
<rect x="140" y="211" width="0.9" height="5" fill="#b8bec8" />
<circle cx="152.5" cy="213.5" r="2.2" fill="none" stroke="#c0c6ce" stroke-width="1"/>
<circle cx="155.5" cy="214.5" r="1.4" fill="#c83028" />
<path d="M166 214.5 L167 211.5 L168 213 L169 212 L170 215.5 Q168 216.5 166 214.5 Z" fill="#b8bec8" />
<rect x="177" y="211" width="6" height="4.5" fill="#c8ccd4" />
<path d="M188 215 L190.5 213 M190.5 213 L193.5 211.8" fill="none" stroke="#d0d4da" stroke-width="1.1" />
<path d="M200.7 211.3 H205.7 V215.7 H200.7 Z" fill="none" stroke="#d0d4da" stroke-width="0.9" />
<rect x="201.5" y="212" width="3.5" height="1" fill="#d0d4da" />
<path d="M214.8 216 V211.5 H220.5 V216" fill="none" stroke="#d0d4da" stroke-width="0.9" />
<path d="M229 211.5 L230.5 213.5 L232 211.5 L233.5 213.5 M231.5 213.5 V216" fill="none" stroke="#d0d4da" stroke-width="0.9" />
<circle cx="245" cy="213.5" r="2.3" fill="none" stroke="#8a909a" stroke-width="0.9" stroke-dasharray="1.2 0.6"/>
<path d="M255.5 211.5 V215.5 M258.5 211.5 V215.5" fill="none" stroke="#6a707a" stroke-width="0.8" stroke-dasharray="0.8 0.8"/>
<path d="M268 211.5 H272 M270 211.5 V216" fill="none" stroke="#e0e4e8" stroke-width="1.2" />
<rect x="272" y="214.5" width="1.2" height="1.5" fill="#e0e4e8" />
<rect x="284" y="211" width="5" height="5" fill="#d0d4da" />
<path d="M284.8 211.8 L288.2 215.2 M288.2 211.8 L284.8 215.2" fill="none" stroke="#222b3c" stroke-width="0.7" />
<rect x="297" y="211" width="5" height="5" fill="#a8aeb8" />
<path d="M297.8 211.8 L301.2 215.2" fill="none" stroke="#222b3c" stroke-width="0.7" />
<circle cx="654.5" cy="213" r="1.6" fill="none" stroke="#b8bec8" stroke-width="0.8"/>
<path d="M655.5 214 L657 215.5 M653.5 213 H655.5" fill="none" stroke="#b8bec8" stroke-width="0.7" />
<path d="M680.5 211.5 L684 215 M680.5 211.5 H682.5 M680.5 211.5 V213.5" fill="none" stroke="#b8bec8" stroke-width="0.8" />
<path d="M693 211.5 H690.5 V215.5 H693" fill="none" stroke="#b8bec8" stroke-width="0.9" />
<circle cx="700.5" cy="213.5" r="2" fill="#d0d4da" />
<rect x="700.5" y="212.5" width="1.5" height="1" fill="#222b3c" />
<path d="M13 219.5 V223 H16.5" fill="none" stroke="#c0c6ce" stroke-width="0.8" />
<rect x="14" y="220.5" width="2" height="1.5" fill="#c0c6ce" />
<rect x="25" y="219.5" width="2.5" height="3.5" fill="#c0c6ce" />
<rect x="28.5" y="222" width="0.8" height="0.8" fill="#c0c6ce" />
<path d="M35.3 222.5 L37 219.5 L38.7 222.5 Z" fill="#3aa070" />
<circle cx="39.7" cy="221" r="0.7" fill="#e0e4e8" />
<path d="M54.3 218.3 H57.3 V220.5 L55.8 222 L54.3 220.5 Z" fill="#d8dce4" />
<rect x="7.3" y="232" width="4" height="3" fill="#d0d4da" />
<path d="M11.3 233.5 L12.8 232.3 V234.7 Z" fill="#d0d4da" />
<path d="M22 238 L25 235" fill="none" stroke="#d0d4da" stroke-width="0.8" />
<rect x="25.5" y="237.3" width="0.7" height="0.7" fill="#d0d4da" />
<path d="M33 236.5 L34.5 235.5 V237.5 Z M37 236.5 L35.5 235.5 V237.5 Z" fill="#b0b6c0" />
<path d="M46.3 235 H48 V238 H46.3 Z" fill="none" stroke="#b0b6c0" stroke-width="0.6" />
<rect x="7.3" y="248" width="4" height="3" fill="#d0d4da" />
<path d="M11.3 249.5 L12.8 248.3 V250.7 Z" fill="#d0d4da" />
<path d="M22 253.5 L24.5 251" fill="none" stroke="#3a4a6a" stroke-width="0.8" />
<path d="M33 251.5 L34.5 250.5 V252.5 Z M37 251.5 L35.5 250.5 V252.5 Z" fill="#c0c6ce" />
<rect x="46.3" y="250" width="2" height="2.8" fill="#b0b6c0" />
<path d="M8 261.5 H12 M9.5 261.5 V264" fill="none" stroke="#d0d4da" stroke-width="0.8" />
<path d="M22.5 266 L24.5 264" fill="none" stroke="#5a6272" stroke-width="0.7" />
<path d="M8.8 274.5 L11 277" fill="none" stroke="#d0d4da" stroke-width="1" />
<path d="M22.5 279 L24.5 277" fill="none" stroke="#5a6272" stroke-width="0.7" />
<path d="M33.5 277.5 H37 M33.5 278.5 H37" fill="none" stroke="#b0b6c0" stroke-width="0.5" />
<path d="M46 277.5 L47.2 278.7 L48.4 277.5" fill="none" stroke="#c0c6ce" stroke-width="0.7" />
<path d="M7.5 288 H10 M10.5 287 L12 288.5" fill="none" stroke="#d0d4da" stroke-width="0.8" />
<path d="M22.5 291.5 L24.5 289.5" fill="none" stroke="#5a6272" stroke-width="0.7" />
<path d="M33 290 L34.5 289 V291 Z M37 290 L35.5 289 V291 Z" fill="#c0c6ce" />
<path d="M46 289.5 L47.2 290.7 L48.4 289.5" fill="none" stroke="#c0c6ce" stroke-width="0.7" />
<path d="M27.5 392.8 L28.5 391.5 L29.3 392.5 L30.2 390.8 L31.2 392.8" fill="none" stroke="#3a6ab8" stroke-width="0.7" />
<path d="M36 390.5 L37.5 391.5 L36 392.5 Z" fill="#c0c4cc" />
<path d="M41.5 390.5 L43 391.5 L41.5 392.5 Z" fill="#c0c4cc" /></svg>
<div class="a" style="left:303px;top:147px;width:132px;height:107px;background:#1b2030;border:1px solid #2c3446"></div>
<div class="t" style="left:306px;top:149.5px;font-size:3.8px;line-height:4.8px;color:#f0f2f6;font-weight:bold">Corel VideoStudio</div>
<div class="a" style="left:429px;top:150px;width:2px;height:2px;background:#e8eaee;"></div>
<div class="a" style="left:304px;top:157px;width:127px;height:61px;background:linear-gradient(180deg,#1a2034 0%,#152042 3%,#162245 65%,#17213c 85%,#1b2030 100%)"></div>
<svg class="a" style="left:304px;top:157px" width="127" height="64" viewBox="304 157 127 64">
<defs>
<linearGradient id="lg1" x1="0" y1="0" x2="0" y2="1"><stop offset="0" stop-color="#4a8ae0"/><stop offset="1" stop-color="#22d0e8"/></linearGradient>
<linearGradient id="lg2" x1="0" y1="0" x2="1" y2="0.3"><stop offset="0" stop-color="#38c0ec"/><stop offset="0.45" stop-color="#4a78d8"/><stop offset="0.8" stop-color="#a040e0"/><stop offset="1" stop-color="#d040e8"/></linearGradient>
<linearGradient id="lg3" x1="0" y1="0" x2="0" y2="1"><stop offset="0" stop-color="#d048e8"/><stop offset="1" stop-color="#8030c8"/></linearGradient>
<linearGradient id="lg4" x1="0" y1="0" x2="0" y2="1"><stop offset="0" stop-color="#3050a8"/><stop offset="1" stop-color="#5a30a0"/></linearGradient>
</defs>
<path d="M310.5 171 L313.5 170.5 L340 213 L337 214.5 Z" fill="url(#lg1)"/>
<path d="M320.5 171 L323.5 170.5 L341 204 L338 205 Z" fill="url(#lg4)"/>
<path d="M323 164.3 L352.5 164.3 L337 189.5 Z" fill="url(#lg2)"/>
<path d="M363 170.5 L365.5 172 L349 200 L346.5 198.5 Z" fill="url(#lg3)"/>
<ellipse cx="354" cy="188" rx="8" ry="10" fill="#c040d8" opacity="0.55"/>
<path d="M336 206 L336.5 193 Q346 185 356 191 L356.5 206 Z" fill="#d8c4bc"/>
<ellipse cx="348.3" cy="177.5" rx="6" ry="8" fill="#f2dace"/>
<path d="M342.3 176 Q342 168.5 348.5 168.5 Q354.5 168.8 354.3 175 Q351 171.5 345 173.5 Z" fill="#d8be98"/>
<ellipse cx="345.8" cy="178.3" rx="1.1" ry="0.7" fill="#305070"/>
<ellipse cx="351" cy="178.3" rx="1.1" ry="0.7" fill="#305070"/>
<path d="M347 183 Q348.5 184 350 183" stroke="#c07080" stroke-width="0.6" fill="none"/>
<circle cx="344.5" cy="198.8" r="7.3" fill="#d8b070"/>
<path d="M337.5 196 L351 202.5" stroke="#8a6030" stroke-width="0.7"/>
<path d="M340 192.5 L349 205" stroke="#8a6030" stroke-width="0.7"/>
<rect x="336" y="200.5" width="20" height="0.8" fill="#506060" opacity="0.7"/>
<rect x="352" y="193" width="5" height="7" fill="#70a0a0" opacity="0.55"/>
<text x="355" y="202.3" font-family="Liberation Sans" font-size="10.5" fill="#a0a8c0" opacity="0.6" letter-spacing="1.7">ЖЖЖЖ</text>
<text x="353.8" y="207.8" font-family="Liberation Sans" font-size="4" fill="#9098b0" opacity="0.75" letter-spacing="1.45">WWW.GHXI.COM</text>
<text x="368.8" y="173.3" font-family="Liberation Sans" font-size="2.2" fill="#d0d4e0">Corel</text>
<text x="368.8" y="177.8" font-family="Liberation Sans" font-size="4.6" fill="#f0f2f6" font-weight="bold" textLength="24.5" lengthAdjust="spacingAndGlyphs">VideoStudio</text>
<text x="368.8" y="186" font-family="Liberation Sans" font-size="7.6" fill="#ffffff" font-weight="bold" textLength="27" lengthAdjust="spacingAndGlyphs">ШЖЩЖ</text>
<text x="397" y="185.9" font-family="Liberation Sans" font-size="3.8" fill="#2a8ae0" textLength="29" lengthAdjust="spacingAndGlyphs">ULTIMATE 2019</text>
</svg>
<div class="t" style="left:307.5px;top:220px;font-size:4.3px;line-height:5.3px;color:#d0d4dc;">Corel VideoStudio ЖЖ 22.0.0.326 (64-bit)</div>
<div class="t" style="left:307.5px;top:227.5px;font-size:4.1px;line-height:5.1px;color:#d0d4dc;">ЖЖЖЖЖЖЖЖ ЖЖЖЖЖ (V.S.2019)</div>
<div class="a" style="left:308.5px;top:241px;width:29.5px;height:6.3px;background:#2e3a56;"></div>
<div class="t" style="left:314.55px;top:241.6px;font-size:3.8px;line-height:4.8px;color:#eef0f4;">ЖЖЖЖ...</div>
<div class="a" style="left:341px;top:241px;width:28px;height:6.3px;background:#2e3a56;"></div>
<div class="t" style="left:346.3px;top:241.6px;font-size:3.8px;line-height:4.8px;color:#eef0f4;">ЖЖЖЖ...</div>
<div class="a" style="left:374px;top:241px;width:18px;height:6.3px;background:#2e3a56;"></div>
<div class="t" style="left:377.5px;top:241.6px;font-size:3.8px;line-height:4.8px;color:#eef0f4;">ЖЖ...</div>
<div class="a" style="left:410.5px;top:241px;width:18.5px;height:6.3px;background:#2e3a56;"></div>
<div class="t" style="left:419.05px;top:241.6px;font-size:3.8px;line-height:4.8px;color:#eef0f4;">ЖЖ</div>
</body></html>
